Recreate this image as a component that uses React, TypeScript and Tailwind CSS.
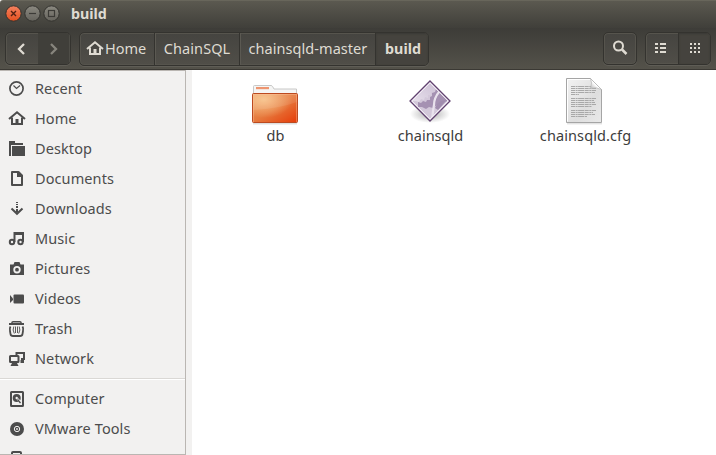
import React from 'react';

type IconName =
  | 'recent' | 'home' | 'desktop' | 'documents' | 'downloads' | 'music'
  | 'pictures' | 'videos' | 'trash' | 'network' | 'computer' | 'disc' | 'device';

function Icon({ name, className = '' }: { name: IconName; className?: string }) {
  const shapes: Record<IconName, React.ReactNode> = {
    recent: (
      <g fill="none" stroke="currentColor">
        <circle cx="7.5" cy="7.5" r="6.6" strokeWidth="1.7" />
        <path d="M4.5 4.5 7.5 7.5 11 4.5" strokeWidth="1.2" />
      </g>
    ),
    home: (
      <>
        <path d="M0 8 8 1.3 16 8" fill="none" stroke="currentColor" strokeWidth="2" />
        <path d="M3 6.5V13H13V6.5" fill="none" stroke="currentColor" strokeWidth="2" />
        <path d="M6.5 8h3v5h-3z" fill="currentColor" />
      </>
    ),
    desktop: (
      <>
        <path d="M0 0h6v2h8v2H2v11H0z" fill="currentColor" />
        <rect x="3" y="5" width="13" height="10" fill="currentColor" />
      </>
    ),
    documents: (
      <>
        <path d="M3 1h6.5L13 4.5V14H3z" fill="none" stroke="currentColor" strokeWidth="2" strokeLinejoin="round" />
        <path d="M8 1v5h5V4L10 1z" fill="currentColor" />
      </>
    ),
    downloads: (
      <>
        <path d="M7 1h2v1H7zM7 3h2v1H7zM7 5h2v2H7zM7 8h2v3H7z" fill="currentColor" />
        <path d="M2.5 7.5 8 12.8l5.5-5.3" fill="none" stroke="currentColor" strokeWidth="2" />
      </>
    ),
    music: (
      <g fill="none" stroke="currentColor" strokeWidth="2">
        <circle cx="3" cy="11" r="2.2" />
        <circle cx="11.5" cy="11" r="2.2" />
        <path d="M5.5 11V2H14v9M5 3h9" />
      </g>
    ),
    pictures: (
      <path fillRule="evenodd" d="M1 3.5h3.5L5.5 1h5l1 2.5H15V14H1zM8 5a3.7 3.7 0 1 0 0 7.4A3.7 3.7 0 0 0 8 5zm0 1.8a1.9 1.9 0 1 1 0 3.8 1.9 1.9 0 0 1 0-3.8z" fill="currentColor" />
    ),
    videos: (
      <>
        <path d="m1 4 3 3.5V9l-3 3z" fill="currentColor" />
        <rect x="4.5" y="3.5" width="10.5" height="9" rx="1" fill="currentColor" />
      </>
    ),
    trash: (
      <>
        <path d="M3 2.5V1.5Q3 .7 4 .7h7q1 0 1 .8v1" fill="none" stroke="currentColor" strokeWidth="1.5" />
        <path d="M0 2h15v2H0z" fill="currentColor" />
        <path d="M1.500 5.500Q.3 7.500 1 10l.5 3q.3 2 2.500 2h7q2.200 0 2.500-2l.5-3q.7-2.500-.5-4.500" fill="none" stroke="currentColor" strokeWidth="1.8" />
        <path d="M4.800 5.500q-1.600 3.500.5 7M6.500 5.500v6.500M8.500 5.500v6.500M10.200 5.500q1.600 3.500-.5 7" fill="none" stroke="currentColor" strokeWidth=".9" />
      </>
    ),
    network: (
      <>
        <path d="M7.500 4V2H15v6h-3" fill="none" stroke="currentColor" strokeWidth="2" />
        <path d="M11.500 9H15v3h-3.500z" fill="currentColor" />
        <rect x="1" y="5" width="8.500" height="6" rx=".5" fill="none" stroke="currentColor" strokeWidth="2" />
        <path d="M3 12h5l1.500 3h-8z" fill="currentColor" />
      </>
    ),
    computer: (
      <>
        <rect x="2" y="1" width="12" height="14" rx=".5" fill="none" stroke="currentColor" strokeWidth="2" />
        <circle cx="7.7" cy="7" r="4" fill="currentColor" />
        <circle cx="7.7" cy="7" r="1.2" fill="#f2f1f0" />
        <path d="m8.500 8 3.500 4" stroke="#f2f1f0" fill="none" strokeWidth="2.2" />
        <path d="m8.500 8.500 3 3.500" stroke="currentColor" strokeWidth="1.3" />
      </>
    ),
    disc: (
      <>
        <circle cx="8" cy="8" r="7" fill="currentColor" />
        <circle cx="8" cy="8" r="2.7" fill="none" stroke="#f2f1f0" />
        <circle cx="8" cy="8" r=".9" fill="#f2f1f0" />
      </>
    ),
    device: <rect x="3" y="1" width="9" height="13" rx="1" fill="none" stroke="currentColor" strokeWidth="2" />,
  };
  return (
    <svg viewBox="0 0 16 16" className={`h-4 w-4 shrink-0 overflow-visible ${className}`}>
      {shapes[name]}
    </svg>
  );
}

const places: [IconName, string][] = [
  ['recent', 'Recent'],
  ['home', 'Home'],
  ['desktop', 'Desktop'],
  ['documents', 'Documents'],
  ['downloads', 'Downloads'],
  ['music', 'Music'],
  ['pictures', 'Pictures'],
  ['videos', 'Videos'],
  ['trash', 'Trash'],
  ['network', 'Network'],
];
const devices: [IconName, string][] = [
  ['computer', 'Computer'],
  ['disc', 'VMware Tools'],
];

function Place({ icon, label }: { icon: IconName; label: string }) {
  return (
    <li className="flex h-[30px] shrink-0 items-start pl-[9px] text-[#4c4c4c]">
      <Icon name={icon} className="mt-[7px]" />
      <span className="ml-[10px] whitespace-nowrap leading-[28px] tracking-[0.1px]">{label}</span>
    </li>
  );
}

function WindowButton({ kind }: { kind: 'close' | 'min' | 'max' }) {
  return (
    <svg viewBox="0 0 17 17" className="h-[17px] w-[17px]">
      <defs>
        <linearGradient id={`wb-${kind}`} x2="0" y2="1">
          <stop stopColor={kind === 'close' ? '#f58260' : '#8b8981'} />
          <stop offset="1" stopColor={kind === 'close' ? '#e4501f' : '#65635c'} />
        </linearGradient>
      </defs>
      <circle cx="8.5" cy="8.5" r="7.7" fill={`url(#wb-${kind})`} stroke="#33322e" />
      <g fill="none" stroke={kind === 'close' ? '#522113' : '#3c3b37'} strokeWidth="1.2">
        {kind === 'close' && <path d="m6 6 5 5m0-5-5 5" strokeWidth="1.4" />}
        {kind === 'min' && <path d="M5 8.5h7" />}
        {kind === 'max' && <rect x="5.5" y="5.5" width="6" height="6" />}
      </g>
    </svg>
  );
}

const group =
  'flex overflow-hidden rounded-[5px] border border-[#34332f] bg-linear-to-b from-[#454440] to-[#504e48] shadow-[inset_0_0_0_1px_#56544d,0_1px_0_#5f5d56]';

function Folder() {
  return (
    <svg viewBox="0 0 48 42" className="h-[42px] w-[48px]">
      <defs>
        <linearGradient id="folder" x1="0" y1="0" x2="1" y2="1">
          <stop stopColor="#e9995a" /><stop offset=".5" stopColor="#e67a3e" /><stop offset="1" stopColor="#e63b08" />
        </linearGradient>
        <radialGradient id="folderGlow" cx=".25" cy=".2" r=".65">
          <stop stopColor="#ffd7a0" stopOpacity=".7" /><stop offset="1" stopColor="#ffd7a0" stopOpacity="0" />
        </radialGradient>
      </defs>
      <path d="M2 39h44v1.5H2z" fill="#000" opacity=".13" />
      <path d="M2.5 11V2.5q0-1 1-1h16.5q1 0 1.7 1.2l1.3 2.3h22.5v6z" fill="#f5f5f4" stroke="#c8c8c7" />
      <rect x="5" y="3" width="13" height="2.2" fill="#ee9570" />
      <rect x="1.5" y="9.5" width="45" height="29" rx="1" fill="url(#folder)" stroke="#bc4a20" />
      <rect x="2" y="10" width="44" height="28" fill="url(#folderGlow)" />
      <path d="M2 10h44v8Q27 25 2 26z" fill="#fff" opacity=".09" />
      <path d="M2.5 38V10.5h43V38" fill="none" stroke="#ffc19a" opacity=".4" />
    </svg>
  );
}

function Executable() {
  return (
    <svg viewBox="0 0 42 46" className="h-[46px] w-[42px] overflow-visible">
      <defs>
        <radialGradient id="gemShadow">
          <stop stopColor="#777" stopOpacity=".6" /><stop offset="1" stopColor="#777" stopOpacity="0" />
        </radialGradient>
        <linearGradient id="gemTop" x1="0" y1="1" x2="1" y2="0">
          <stop stopColor="#e9e2ed" /><stop offset="1" stopColor="#c9bcd2" />
        </linearGradient>
        <clipPath id="gemClip"><path d="M21 4 39 22 21 40 3 22z" /></clipPath>
      </defs>
      <ellipse cx="21" cy="35" rx="20" ry="9" fill="url(#gemShadow)" />
      <path d="M21 2 41 22 21 42 1 22z" fill="#f5f0f8" stroke="#60416f" strokeWidth="1.3" />
      <g clipPath="url(#gemClip)">
        <rect width="42" height="46" fill="#d3c8da" />
        <path d="M9 23l3 1 2-2 3 1 1-2 3 0 0-3 2-1 0-3 3-1 1-3 3 0 9 12-6 1-5 3-4 3-4-1-3 2-4-2-4 0z" fill="#a591b2" />
        <path d="M0 0h28l-1 9-3 1 1 3-3 0 0 3-3 0 0 3-3-1-1 3-3-1-2 3-3-1H0z" fill="url(#gemTop)" />
        <path d="M30 13q-5 6-5 13-1 5-2 15" fill="none" stroke="#e9e2ed" strokeWidth="2.2" />
        <path d="m28 25 4-3 6-1-9 10-3-2z" fill="#a08cae" />
      </g>
      <path d="M21 4 39 22 21 40 3 22z" fill="none" stroke="#f7f2fa" opacity=".8" />
    </svg>
  );
}

function TextFile() {
  const lines = [[8, 22], [10, 25], [12, 25], [14, 24], [16, 8], [20, 25], [22, 23], [24, 24], [26, 25], [28, 21], [32, 25], [34, 22], [36, 24], [38, 16]];
  return (
    <svg viewBox="0 0 38 47" className="h-[47px] w-[38px] overflow-visible">
      <defs>
        <linearGradient id="paper" x1="0" y1="0" x2="1" y2="1">
          <stop stopColor="#f3f3f3" /><stop offset=".6" stopColor="#dedede" /><stop offset="1" stopColor="#e9e9e9" />
        </linearGradient>
        <linearGradient id="fold" x1="0" y1="1" x2="1" y2="0">
          <stop stopColor="#b0b0b0" /><stop offset=".45" stopColor="#fff" /><stop offset="1" stopColor="#e2e2e2" />
        </linearGradient>
      </defs>
      <path d="M2 45.8h35" stroke="#000" opacity=".15" />
      <path d="M1.5 .5h24L36.5 11.5v33h-35z" fill="url(#paper)" stroke="#a5a5a5" />
      <path d="M2.5 43.5v-42h23" fill="none" stroke="#fff" />
      {lines.map(([y, w]) => (
        <path key={y} d={`M6 ${y + 0.5}h${w}`} stroke="#a8a8a8" strokeDasharray="4 .6 2 .5 6 .6" />
      ))}
      <path d="M25.5 .5q2 4 0 10 5-2 11 1z" fill="url(#fold)" stroke="#b5b5b5" strokeWidth=".7" />
    </svg>
  );
}

export default function App() {
  return (
    <div className="flex h-[455px] w-[716px] flex-col overflow-hidden bg-white font-['Noto_Sans',sans-serif] text-[14.5px] text-[#3c3c3c]">
      <header className="flex h-[28px] shrink-0 items-start rounded-tl-[3px] border-t border-[#68665b] bg-linear-to-b from-[#5b5950] to-[#403f3a] pl-[5px] pt-[4px]">
        <div className="flex gap-[2px]">
          <WindowButton kind="close" />
          <WindowButton kind="min" />
          <WindowButton kind="max" />
        </div>
        <h1 className="ml-[11px] text-[14.3px] font-bold leading-[18px] text-[#dfdbd2]">build</h1>
      </header>

      <nav className="flex h-[42px] shrink-0 items-start border-b border-[#3b3934] bg-linear-to-b from-[#3d3c38] to-[#54524a] px-[5px] pt-[4px] text-[#dfdbd2]">
        <div className={`${group} h-[33px] w-[66px]`}>
          <div className="flex w-[32px] items-center justify-center">
            <svg viewBox="0 0 8 12" className="-ml-[2px] h-3 w-2"><path d="M7 1 2 6l5 5" fill="none" stroke="currentColor" strokeWidth="2.3" /></svg>
          </div>
          <div className="flex flex-1 items-center justify-center bg-[#403f3a] text-[#87857d] shadow-[inset_-1px_0_0_#4e4d47]">
            <svg viewBox="0 0 8 12" className="h-3 w-2"><path d="m1 1 5 5-5 5" fill="none" stroke="currentColor" strokeWidth="2.3" /></svg>
          </div>
        </div>
        <div className={`${group} ml-2 h-[34px] w-[350px] leading-[30px]`}>
          <div className="flex w-[75px] items-start border-r border-[#34332f] pl-[7px]">
            <Icon name="home" className="mt-[8px]" />
            <span className="ml-[2px]">Home</span>
          </div>
          <div className="w-[85px] border-r border-[#34332f] text-center tracking-[0.1px] shadow-[inset_1px_0_0_#5b5952]">ChainSQL</div>
          <div className="w-[136px] border-r border-[#34332f] pl-px text-center tracking-[0.05px] shadow-[inset_1px_0_0_#5b5952]">chainsqld-master</div>
          <div className="flex-1 bg-[#45433e] pl-[2px] text-center text-[14.3px] font-bold leading-[32px] shadow-[inset_0_1px_2px_#3a3935]">build</div>
        </div>
        <div className={`${group} ml-auto h-[33px] w-[34px] items-center justify-center`}>
          <svg viewBox="0 0 16 16" className="-mt-px h-4 w-4 overflow-visible"><circle cx="6.5" cy="6" r="4.5" fill="none" stroke="currentColor" strokeWidth="2" /><path d="m10 9.5 4.5 4.5" stroke="currentColor" strokeWidth="2.5" /></svg>
        </div>
        <div className={`${group} ml-2 h-[33px] w-[66px]`}>
          <div className="flex w-[33px] items-center justify-center border-r border-[#34332f]">
            <svg viewBox="0 0 11 10" className="-ml-[4px] -mt-px h-[10px] w-[11px]"><path d="M0 0h3v2H0zM5 0h6v2H5zM0 4h3v2H0zM5 4h6v2H5zM0 8h3v2H0zM5 8h6v2H5z" fill="currentColor" /></svg>
          </div>
          <div className="flex flex-1 items-center justify-center bg-[#45433e] shadow-[inset_0_1px_2px_#3a3935]">
            <svg viewBox="0 0 10 10" className="-mt-px h-[10px] w-[10px]"><path d="M0 0h2v2H0zM4 0h2v2H4zM8 0h2v2H8zM0 4h2v2H0zM4 4h2v2H4zM8 4h2v2H8zM0 8h2v2H0zM4 8h2v2H4zM8 8h2v2H8z" fill="currentColor" /></svg>
          </div>
        </div>
      </nav>

      <main className="flex min-h-0 flex-1">
        <aside className="flex w-[186px] shrink-0 flex-col overflow-hidden border-y border-r border-[#bab6b2] bg-[#f2f1f0] pt-[3px]">
          <ul>{places.map(([icon, label]) => <Place key={label} icon={icon} label={label} />)}</ul>
          <div className="mt-[4px] mb-[4px] h-[2px] shrink-0 border-t border-[#dad8d5] bg-white" />
          <ul>{devices.map(([icon, label]) => <Place key={label} icon={icon} label={label} />)}</ul>
          <div className="flex h-[10px] shrink-0 items-start overflow-hidden pl-[9px] text-[#4c4c4c]">
            <Icon name="device" className="mt-[7px]" />
          </div>
        </aside>
        <div className="w-[6px] shrink-0 bg-[#f2f1f0]" />
        <section className="flex flex-1 items-start bg-white pl-[6px] pt-[7px]">
          <figure className="flex w-[155px] flex-col items-center">
            <div className="-ml-[2px] flex h-[49px] items-end"><Folder /></div>
            <figcaption className="-mt-[2px] leading-[22px]">db</figcaption>
          </figure>
          <figure className="flex w-[155px] flex-col items-center">
            <div className="-ml-[2px] flex h-[48px] items-end"><Executable /></div>
            <figcaption className="-mt-px leading-[22px]">chainsqld</figcaption>
          </figure>
          <figure className="flex w-[155px] flex-col items-center">
            <div className="-ml-[3px] flex h-[48px] items-end"><TextFile /></div>
            <figcaption className="-mt-px leading-[22px] tracking-[0.1px]">chainsqld.cfg</figcaption>
          </figure>
        </section>
      </main>
    </div>
  );
}
